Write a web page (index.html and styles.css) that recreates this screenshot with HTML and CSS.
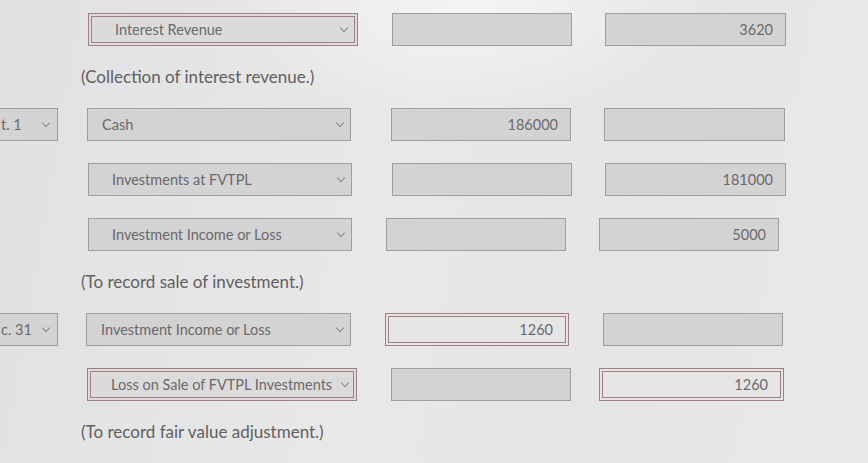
FILE: index.html
```html
<!DOCTYPE html>
<html lang="en">
<head>
  <meta charset="UTF-8">
  <title>Journal Entries</title>
  <link rel="stylesheet" href="styles.css">
</head>
<body>
  <div class="sheet">

    <div class="row first">
      <div class="date empty"></div>
      <div class="field acct wide marked indent">Interest Revenue<span class="chev"></span></div>
      <div class="field amt debit"></div>
      <div class="field amt credit">3620</div>
    </div>
    <div class="note">(Collection of interest revenue.)</div>

    <div class="row">
      <div class="field date">t. 1<span class="chev"></span></div>
      <div class="field acct">Cash<span class="chev"></span></div>
      <div class="field amt debit">186000</div>
      <div class="field amt credit"></div>
    </div>

    <div class="row">
      <div class="date empty"></div>
      <div class="field acct indent">Investments at FVTPL<span class="chev"></span></div>
      <div class="field amt debit"></div>
      <div class="field amt credit">181000</div>
    </div>

    <div class="row skew">
      <div class="date empty"></div>
      <div class="field acct indent">Investment Income or Loss<span class="chev"></span></div>
      <div class="field amt debit"></div>
      <div class="field amt credit">5000</div>
    </div>
    <div class="note">(To record sale of investment.)</div>

    <div class="row dec">
      <div class="field date">c. 31<span class="chev"></span></div>
      <div class="field acct">Investment Income or Loss<span class="chev"></span></div>
      <div class="field amt debit marked blank">1260</div>
      <div class="field amt credit"></div>
    </div>

    <div class="row last">
      <div class="date empty"></div>
      <div class="field acct wide marked indent">Loss on Sale of FVTPL Investments<span class="chev"></span></div>
      <div class="field amt debit"></div>
      <div class="field amt credit marked blank">1260</div>
    </div>
    <div class="note">(To record fair value adjustment.)</div>

  </div>
</body>
</html>
```

FILE: styles.css
```css
body {
  margin: 0;
  width: 868px;
  height: 463px;
  overflow: hidden;
  font-family: Lato, "Open Sans", sans-serif;
  color: #6b696b;
  background:
    radial-gradient(ellipse 260px 120px at 470px 0px, rgba(255,255,255,0.55), rgba(255,255,255,0)),
    linear-gradient(100deg, #e1e0e2 0%, #e9e8e9 45%, #e6e5e6 70%, #eae9ea 100%);
}
.sheet {
  padding-top: 13px;
  display: flex;
  flex-direction: column;
}
.row {
  display: flex;
  align-items: center;
  height: 33px;
  margin-bottom: 22px;
}
.field {
  box-sizing: border-box;
  height: 33px;
  background: #d4d3d4;
  border: 1px solid #9e9d9f;
  font-size: 14.5px;
  display: flex;
  align-items: center;
  position: relative;
}
.date {
  width: 58px;
  margin-right: 29px;
  padding-left: 1px;
  border-left: none;
}
.date.empty {
  height: 33px;
}
.acct {
  width: 264px;
  padding-left: 14px;
}
.acct.wide {
  width: 270px;
}
.acct.indent {
  padding-left: 23px;
}
.amt {
  width: 180px;
  justify-content: flex-end;
  padding-right: 12px;
}
.debit {
  margin-left: 40px;
}
.credit {
  margin-left: 33px;
  width: 181px;
}
.marked {
  border: 4px double #a47f81;
}
.blank {
  background: #e6e5e6;
}
.marked.acct {
  background: #dcdbdc;
  padding-left: 23px;
}
.chev {
  position: absolute;
  right: 7px;
  top: calc(50% - 5px);
  width: 5px;
  height: 5px;
  border-right: 1px solid #8c8a8c;
  border-bottom: 1px solid #8c8a8c;
  transform: rotate(45deg);
}
.date .chev {
  right: 8px;
}
.first .debit {
  margin-left: 34px;
  width: 180px;
}
.first .credit {
  margin-left: 33px;
}
.skew .debit {
  margin-left: 34px;
}
.skew .credit {
  width: 180px;
}
.dec .acct {
  margin-left: -1px;
  width: 265px;
}
.dec .debit {
  margin-left: 34px;
  width: 184px;
}
.dec .credit {
  margin-left: 34px;
  width: 180px;
}
.last .acct {
  margin-left: -1px;
  width: 270px;
}
.last .marked.acct {
  padding-left: 20px;
}
.last .chev {
  right: 5px;
}
.last .debit {
  margin-left: 34px;
  width: 180px;
}
.last .credit {
  margin-left: 28px;
  width: 185px;
}
.note {
  font-size: 17px;
  line-height: 24px;
  margin: -3px 0 19px 81px;
  color: #615f61;
}
```
